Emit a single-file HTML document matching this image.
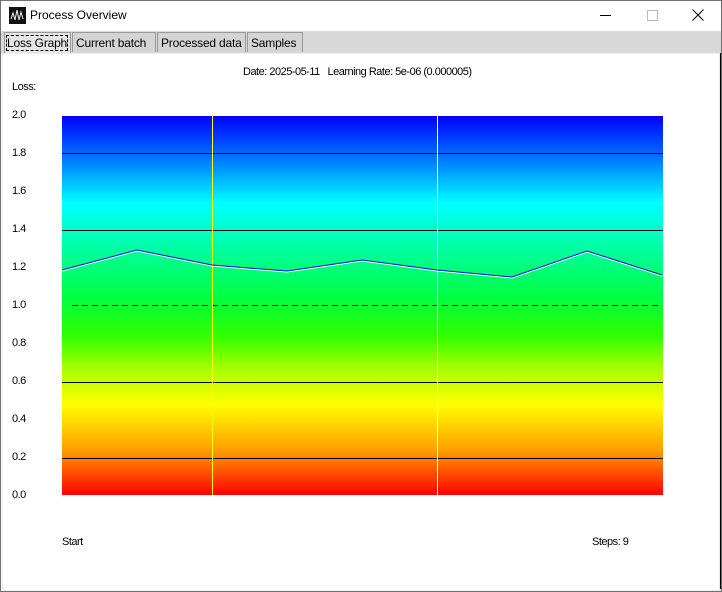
<!DOCTYPE html>
<html><head><style>
body{margin:0;width:722px;height:592px;position:relative;background:#fff;font-family:"Liberation Sans",sans-serif;overflow:hidden}
.a{position:absolute}
.t{position:absolute;font-size:11px;color:#000;letter-spacing:-0.5px;white-space:nowrap}
.tab{position:absolute;top:32px;height:20px;background:#d4d4d4;border:1px solid #999;border-bottom:none;font-size:12px;line-height:20px;padding:0 3px;box-sizing:border-box;font-family:"Liberation Sans",sans-serif;white-space:nowrap;letter-spacing:-0.2px;overflow:hidden}
</style></head><body>
<div class="a" style="left:0;top:0;width:720px;height:590px;border:1px solid #707070"></div>
<div class="a" style="left:9px;top:7px;width:17px;height:17px;background:#111"></div>
<svg class="a" style="left:9px;top:7px" width="17" height="17"><path d="M2 12 L4 6 L6 13 L8 3 L10 13 L12 5 L14 12" stroke="#eee" fill="none" stroke-width="1"/></svg>
<div class="a" style="left:30px;top:8px;font-size:12px">Process Overview</div>
<div class="a" style="left:600px;top:15px;width:11px;height:1px;background:#000"></div>
<div class="a" style="left:647px;top:10px;width:9px;height:9px;border:1px solid #bbb"></div>
<svg class="a" style="left:692px;top:9px" width="12" height="12"><path d="M0.5 0.5L11.5 11.5M11.5 0.5L0.5 11.5" stroke="#000"/></svg>
<div class="a" style="left:1px;top:31px;width:720px;height:22px;background:#d8d8d8"></div>
<div class="tab" style="left:4px;width:67px;padding:0 2px;top:32px;height:22px;background:#e6e6e6"><span style="outline:1px dashed #000">Loss Graph</span></div>
<div class="tab" style="left:72px;width:84px">Current batch</div>
<div class="tab" style="left:157px;width:89px">Processed data</div>
<div class="tab" style="left:247px;width:56px">Samples</div>
<div class="a" style="left:2px;top:53px;width:716px;height:536px;background:#fff;border:1px solid #eee;border-right:2px solid #e8e8e8"></div>
<div class="a" style="left:720px;top:53px;width:1px;height:536px;background:#000"></div>
<div class="t" style="left:243px;top:66px">Date: 2025-05-11 &nbsp; Learning Rate: 5e-06 (0.000005)</div>
<div class="t" style="left:12px;top:81px">Loss:</div>
<div class="a" style="left:62px;top:116px;width:601px;height:379px;background:linear-gradient(#0000ff 0%,#0080ff 12%,#00ffff 23%,#00ffa0 35%,#00ff40 48%,#30ff00 58%,#a0ff00 66%,#ffff00 76%,#ffa000 88%,#ff0000 100%)"></div>
<svg class="a" style="left:0;top:0" width="722" height="592">
<g stroke="#000" stroke-width="1">
<line x1="62" y1="153.5" x2="663" y2="153.5"/><line x1="62" y1="230.5" x2="663" y2="230.5"/>
<line x1="62" y1="382.5" x2="663" y2="382.5"/><line x1="62" y1="458.5" x2="663" y2="458.5"/>
<line x1="72" y1="305.5" x2="660" y2="305.5" stroke-dasharray="6,4"/></g>
<line x1="212.5" y1="116" x2="212.5" y2="495" stroke="#ffff00"/>
<line x1="437.5" y1="116" x2="437.5" y2="495" stroke="#fff"/>
<polyline points="62,271 137,251 212,266 287,272 362,261 437,271 512,278 587,252 662,276" fill="none" stroke="#fff" stroke-width="1"/>
<polyline points="62,270 137,250 212,265 287,271 362,260 437,270 512,277 587,251 662,275" fill="none" stroke="#0000ff" stroke-width="1"/>
</svg>
<div class="t" style="left:12px;top:109px">2.0</div>
<div class="t" style="left:12px;top:147px">1.8</div>
<div class="t" style="left:12px;top:185px">1.6</div>
<div class="t" style="left:12px;top:223px">1.4</div>
<div class="t" style="left:12px;top:261px">1.2</div>
<div class="t" style="left:12px;top:299px">1.0</div>
<div class="t" style="left:12px;top:337px">0.8</div>
<div class="t" style="left:12px;top:375px">0.6</div>
<div class="t" style="left:12px;top:413px">0.4</div>
<div class="t" style="left:12px;top:451px">0.2</div>
<div class="t" style="left:12px;top:489px">0.0</div>
<div class="t" style="left:62px;top:536px">Start</div>
<div class="t" style="left:592px;top:536px">Steps: 9</div>
</body></html>
